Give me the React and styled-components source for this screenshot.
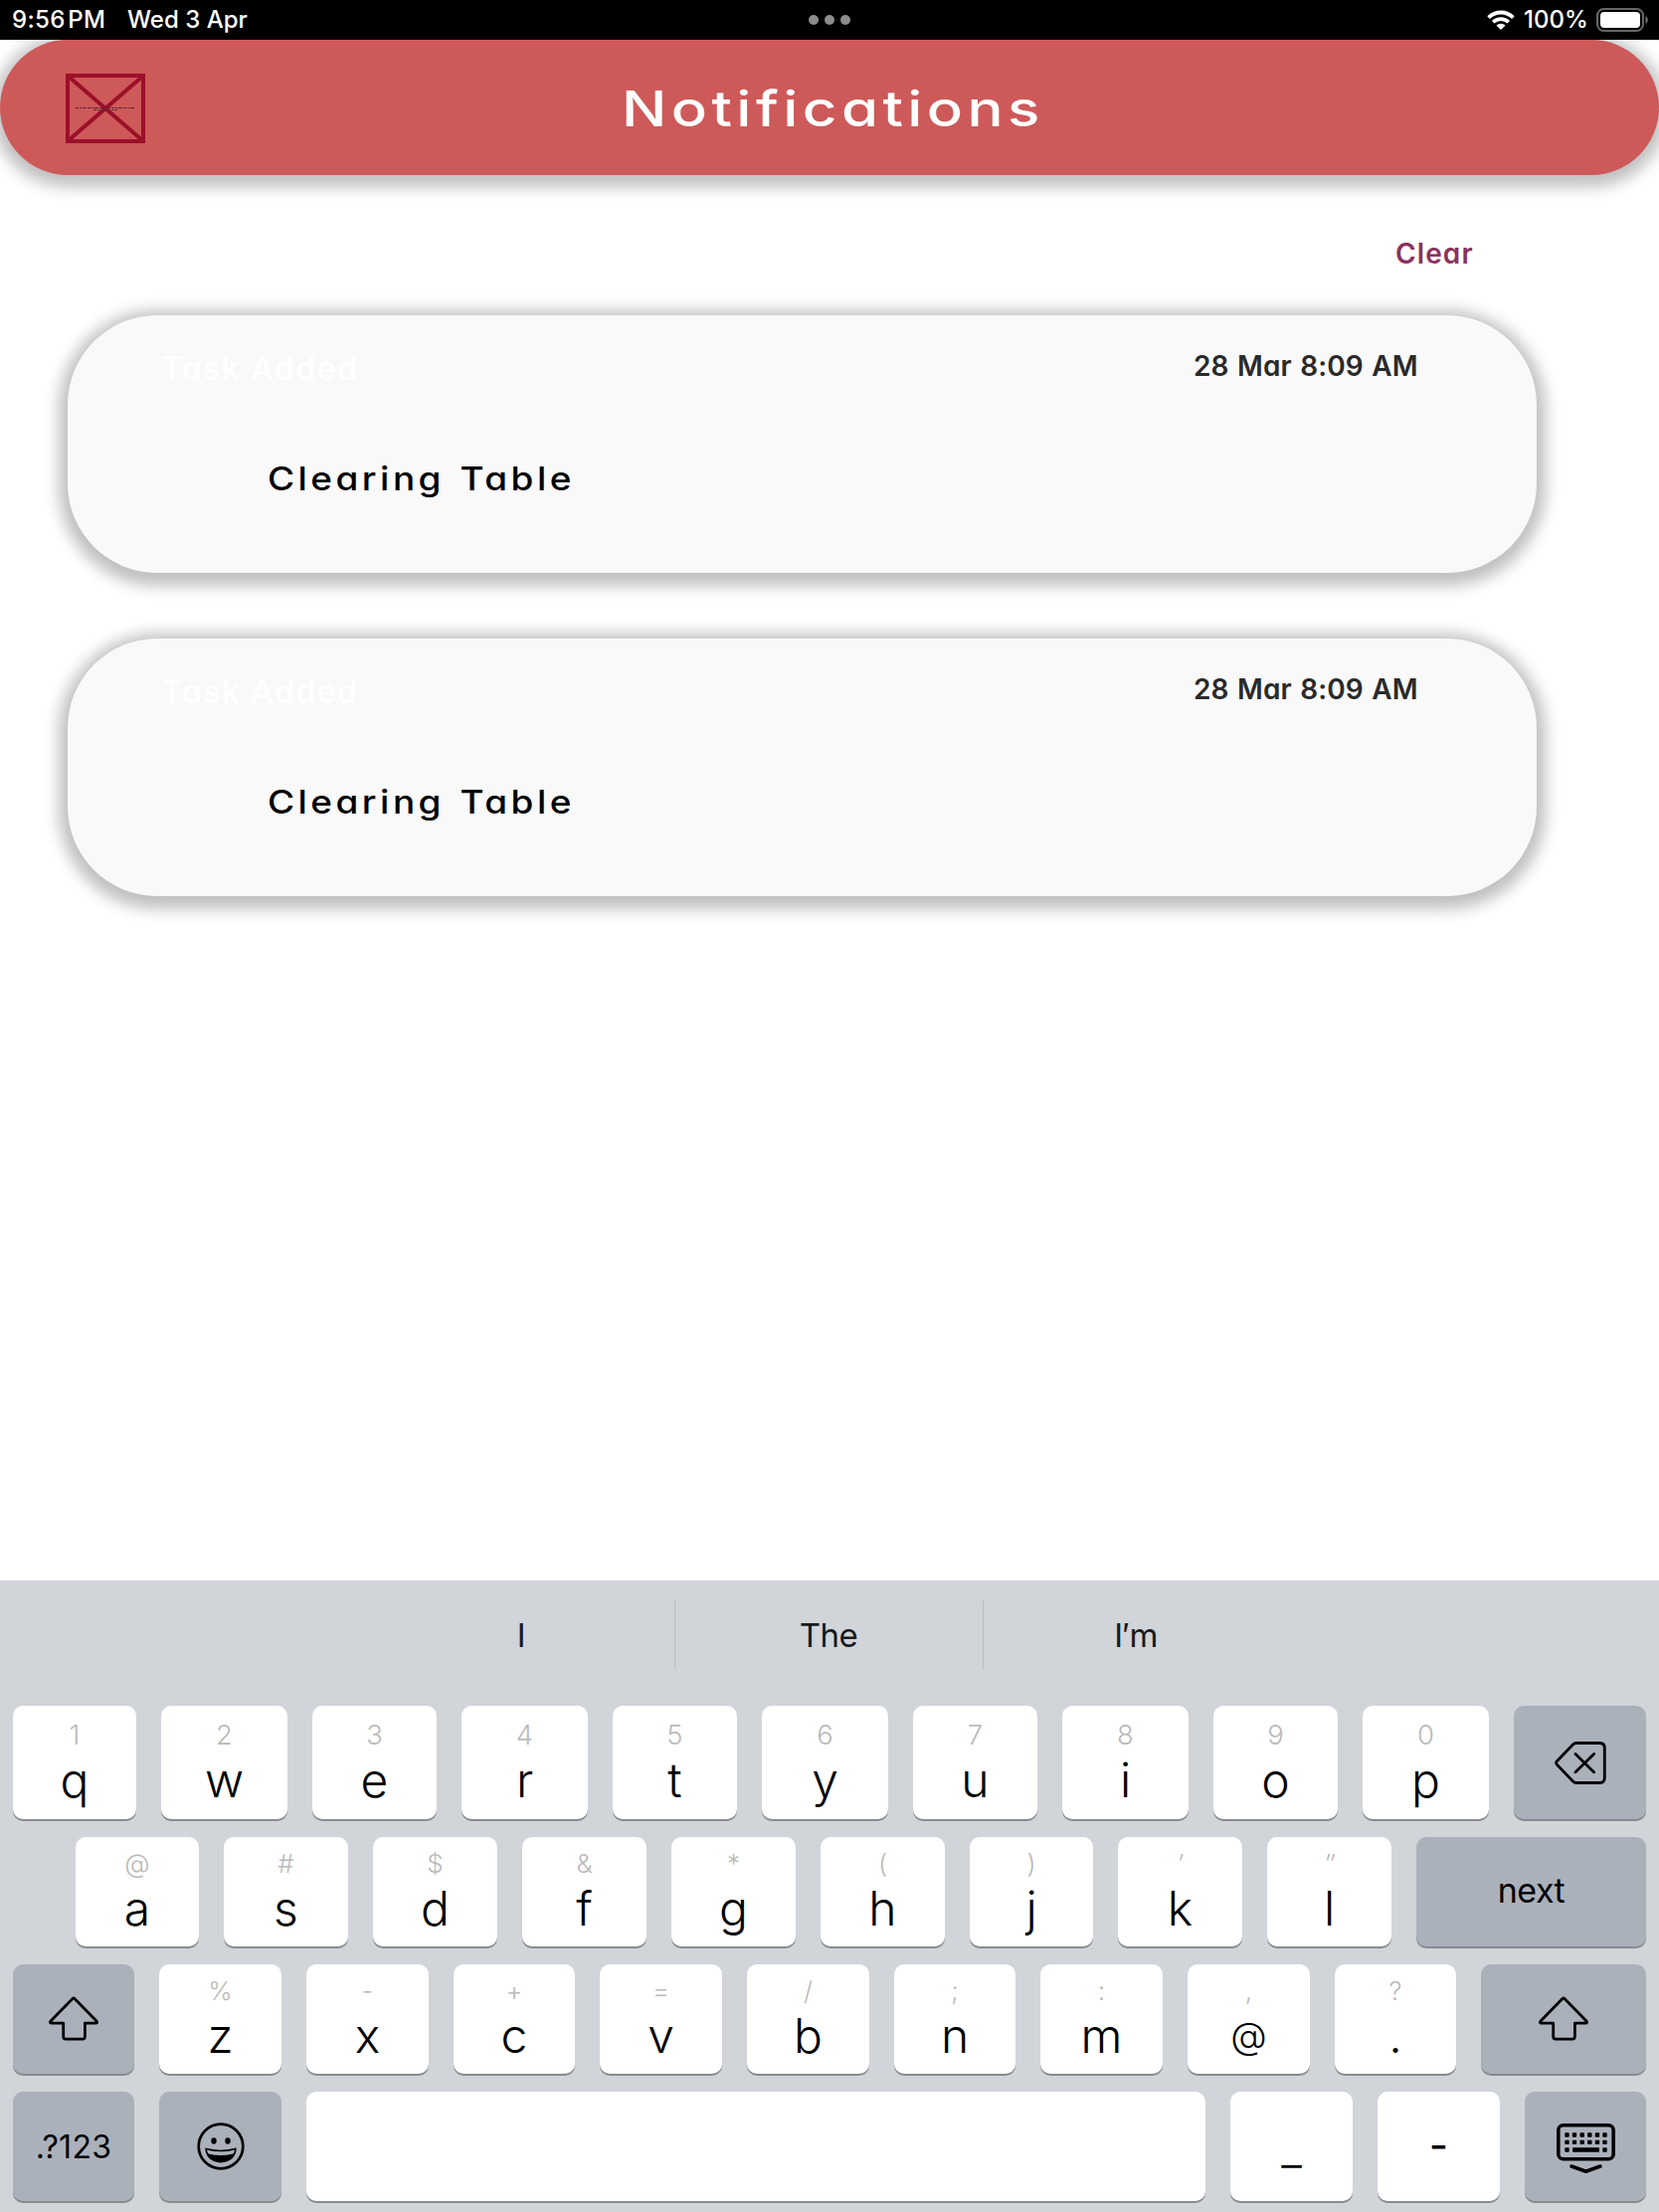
import React from "react";
import styled, { createGlobalStyle } from "styled-components";

const Global = createGlobalStyle`
  *, *::before, *::after { box-sizing: border-box; }
  html, body { margin: 0; padding: 0; background: #fff; }
  body { font-family: Inter, Roboto, "Liberation Sans", sans-serif; overflow: hidden; }
  button { font: inherit; border: 0; margin: 0; padding: 0; background: none; color: inherit; }
`;

const Screen = styled.div`
  width: 1668px;
  height: 2224px;
  display: flex;
  flex-direction: column;
  background: #fff;
  overflow: hidden;
`;

/* ---------- status bar ---------- */

const StatusBar = styled.div`
  flex: none;
  height: 40px;
  display: grid;
  grid-template-columns: 1fr auto 1fr;
  align-items: center;
  padding: 0 10px 0 12px;
  background: #000;
  color: #fff;
  font-size: 24px;
  font-weight: 450;
  line-height: 40px;
  z-index: 1;
`;

const StatusGroup = styled.div`
  display: flex;
  align-items: center;
  height: 40px;
  justify-content: ${(p) => (p.$end ? "flex-end" : "flex-start")};
`;

const StatusText = styled.span`
  width: ${(p) => p.$w}px;
  padding-left: ${(p) => p.$pl || 0}px;
  letter-spacing: ${(p) => p.$ls || 0}px;
  word-spacing: ${(p) => p.$ws || 0}px;
  white-space: nowrap;
`;

const Dots = styled.div`
  display: flex;
  gap: 6px;
  margin-right: 2px;
`;

const Dot = styled.i`
  width: 10px;
  height: 10px;
  border-radius: 50%;
  background: #8c8c8c;
`;

/* ---------- header ---------- */

const Header = styled.header`
  flex: none;
  height: 136px;
  display: flex;
  align-items: center;
  padding: 2px 0 0 66px;
  border-radius: 68px;
  background: #ce5959;
  box-shadow: 0 4px 15px 8px #c0c0c0;
`;

const Title = styled.h1`
  margin: 0 0 1px 479px;
  font-size: 50px;
  font-weight: 450;
  line-height: 60px;
  letter-spacing: 3.7px;
  color: #fff;
  font-feature-settings: "cv11", "ss03";
  transform: scaleX(1.2);
  transform-origin: left center;
  white-space: nowrap;
`;

/* ---------- notifications ---------- */

const Content = styled.main`
  flex: 1;
  display: flex;
  flex-direction: column;
  padding: 59px 123px 0 68px;
  font-feature-settings: "cv11", "ss03";
`;

const ClearButton = styled.button`
  align-self: flex-end;
  width: 142px;
  height: 40px;
  margin-bottom: 42px;
  text-align: left;
  font-size: 28px;
  font-weight: 600;
  line-height: 40px;
  letter-spacing: 1.1px;
  color: #8a335e;
  font-feature-settings: inherit;
`;

const CardList = styled.div`
  display: flex;
  flex-direction: column;
  gap: 66px;
`;

const Card = styled.article`
  height: 259px;
  padding: 33px 0 0 95px;
  border-radius: 90px;
  background: #f9f9f9;
  box-shadow: 0 4px 15px 9px #c0c0c0;
`;

const CardTop = styled.div`
  display: flex;
  height: 40px;
`;

const Kind = styled.div`
  width: 1037px;
  font-size: 32px;
  font-weight: 500;
  line-height: 42px;
  letter-spacing: 1.5px;
  color: #fff;
`;

const When = styled.time`
  font-size: 28px;
  font-weight: 600;
  line-height: 36px;
  letter-spacing: 0.1px;
  word-spacing: 1.3px;
  color: #2a2a2a;
  white-space: nowrap;
`;

const Message = styled.p`
  width: max-content;
  margin: 71px 0 0 106px;
  font-size: 33px;
  font-weight: 480;
  line-height: 40px;
  letter-spacing: 3.1px;
  word-spacing: 2px;
  color: #000;
  transform: scaleX(1.12);
  transform-origin: left center;
  white-space: nowrap;
`;

/* ---------- keyboard ---------- */

const Keyboard = styled.section`
  flex: none;
  height: 635px;
  display: flex;
  flex-direction: column;
  padding: 0 13px;
  background: #d1d4d9;
  color: #000;
`;

const Suggestions = styled.div`
  height: 126px;
  display: flex;
  justify-content: center;
  padding: 20px 2px 0 0;
`;

const Suggestion = styled.div`
  width: 309px;
  height: 70px;
  text-align: center;
  font-size: 33px;
  line-height: 70px;
  color: #17191b;
  letter-spacing: -0.5px;
  box-shadow: ${(p) => (p.$divided ? "-1px 0 0 #b9bcc0, 1px 0 0 #b9bcc0" : "none")};
`;

const Row = styled.div`
  flex: none;
  display: grid;
  grid-template-columns: ${(p) => p.$cols};
  column-gap: 25px;
  height: ${(p) => p.$h}px;
  margin: 0 0 ${(p) => p.$mb}px ${(p) => p.$indent || 0}px;
`;

const Key = styled.button`
  display: flex;
  flex-direction: column;
  align-items: center;
  justify-content: ${(p) => (p.$center ? "center" : "flex-start")};
  padding-top: ${(p) => p.$pad || 0}px;
  border-radius: 10px;
  background: ${(p) => (p.$dark ? "#abb1bb" : "#fff")};
  box-shadow: 0 2px 0 #898b8e;
`;

const Hint = styled.span`
  height: 30px;
  font-size: ${(p) => p.$size}px;
  font-weight: 300;
  font-style: ${(p) => (p.$slanted ? "italic" : "normal")};
  line-height: 30px;
  color: #bababa;
`;

const Letter = styled.span`
  height: 52px;
  margin-top: ${(p) => p.$gap}px;
  font-size: ${(p) => p.$size || 48}px;
  font-weight: 350;
  line-height: 52px;
`;

const Word = styled.span`
  font-size: ${(p) => p.$size}px;
  font-weight: ${(p) => p.$weight || 380};
  line-height: 40px;
  letter-spacing: ${(p) => p.$ls || 0}px;
  margin-top: ${(p) => p.$mt || 0}px;
`;

/* ---------- drawings ---------- */

const Svg = styled.svg`
  display: block;
  flex: none;
  overflow: visible;
`;

const Wifi = () => (
  <Svg width="28" height="20" viewBox="0 0 28 20">
    <path d="M0.3 6.2A19.6 19.6 0 0 1 27.7 6.2L25.1 8.9A15.9 15.9 0 0 0 2.9 8.9Z" fill="#fff" />
    <path d="M4.9 10.9A13.1 13.1 0 0 1 23.1 10.9L20.4 13.6A9.2 9.2 0 0 0 7.6 13.6Z" fill="#fff" />
    <path d="M9.4 15.5A6.8 6.8 0 0 1 18.6 15.5L14 20Z" fill="#fff" />
  </Svg>
);

const Battery = () => (
  <Svg width="53" height="24" viewBox="0 0 53 24">
    <rect x="1" y="1" width="46" height="22" rx="6.5" fill="none" stroke="#666" strokeWidth="2" />
    <rect x="4" y="4" width="40" height="16" rx="4" fill="#fff" />
    <path d="M49.5 8a4.6 4.6 0 0 1 0 8Z" fill="#777" />
  </Svg>
);

const CrossedBox = () => (
  <Svg width="80" height="70" viewBox="0 0 80 70">
    <rect x="2" y="2" width="76" height="66" fill="none" stroke="#9b1029" strokeWidth="4" />
    <path d="M3 3L77 67M77 3L3 67" stroke="#9b1029" strokeWidth="4" />
    <path d="M10 34.5H70" stroke="#5a2330" strokeWidth="1" strokeDasharray="3 1 2 1 4 1" />
    <path d="M28 36.5H52" stroke="#5a2330" strokeWidth="1" strokeDasharray="3 1 2 1" />
  </Svg>
);

const Backspace = () => (
  <Svg width="52" height="43" viewBox="0 0 52 43" fill="none" stroke="#000" strokeWidth="2.8" strokeLinecap="round" strokeLinejoin="round">
    <path d="M22 1.5H45.5Q50.3 1.5 50.3 6.5V36.5Q50.3 41.5 45.5 41.5H22Q20 41.5 18.5 40L2.4 23.2Q0.8 21.5 2.4 19.8L18.5 3Q20 1.5 22 1.5Z" />
    <path d="M21 12.5L39.6 30.8M39.6 12.5L21 30.8" />
  </Svg>
);

const Shift = () => (
  <Svg width="50" height="44" viewBox="0 0 50 44" fill="none" stroke="#000" strokeWidth="2.8" strokeLinejoin="round">
    <path d="M24 1.5Q25 0.5 26 1.5L48 24Q49.5 26.1 47 26.1H36.4V39.5Q36.4 42.1 34 42.1H17Q14.7 42.1 14.7 39.5V26.1H3Q0.5 26.1 2 24Z" />
  </Svg>
);

const Smiley = () => (
  <Svg width="48" height="48" viewBox="0 0 48 48">
    <circle cx="24" cy="24" r="22.3" fill="none" stroke="#000" strokeWidth="2.7" />
    <ellipse cx="17" cy="18.5" rx="2.7" ry="3.2" />
    <ellipse cx="31" cy="18.5" rx="2.7" ry="3.2" />
    <path d="M8.3 25.6Q24 29.8 39.7 25.6C39.7 35 33 40.4 24 40.4S8.3 35 8.3 25.6Z" />
    <path d="M10 27.4Q24 31.2 38 27.4Q37.7 29.6 36.3 31.4Q24 34.4 11.7 31.4Q10.3 29.6 10 27.4Z" fill="#abb1bb" />
  </Svg>
);

const HideKeyboard = () => {
  const cols = [10.5, 18, 25.7, 33.3, 41, 48.5];
  return (
    <Svg width="59" height="51" viewBox="0 0 59 51">
      <rect x="1.8" y="1.8" width="55.4" height="34" rx="5" fill="none" stroke="#000" strokeWidth="3.6" />
      {cols.map((x) => (
        <g key={x}>
          <rect x={x - 2.2} y="9.3" width="4.4" height="4.4" rx="0.8" />
          <rect x={x - 2.2} y="16.7" width="4.4" height="4.4" rx="0.8" />
        </g>
      ))}
      <rect x="8.3" y="24.3" width="4.4" height="4.4" rx="0.8" />
      <rect x="16" y="24.3" width="27" height="4.4" rx="0.8" />
      <rect x="46.3" y="24.3" width="4.4" height="4.4" rx="0.8" />
      <path d="M15 43L29.5 48.3L44 43" fill="none" stroke="#000" strokeWidth="3.6" strokeLinecap="round" strokeLinejoin="round" />
    </Svg>
  );
};

/* ---------- data ---------- */

const notifications = [
  { id: 1, kind: "Task Added", when: "28 Mar 8:09 AM", message: "Clearing Table" },
  { id: 2, kind: "Task Added", when: "28 Mar 8:09 AM", message: "Clearing Table" },
];

const rowOne = [["1", "q"], ["2", "w"], ["3", "e"], ["4", "r"], ["5", "t"], ["6", "y"], ["7", "u"], ["8", "i"], ["9", "o"], ["0", "p"]];
const rowTwo = [["@", "a"], ["#", "s"], ["$", "d"], ["&", "f"], ["*", "g"], ["(", "h"], [")", "j"], ["′", "k"], ["″", "l"]];
const rowThree = [["%", "z"], ["-", "x"], ["+", "c"], ["=", "v"], ["/", "b"], [";", "n"], [":", "m"], [",", "@"], ["?", "."]];

const CharKeys = ({ keys, pad, gap, hint }) =>
  keys.map(([small, big]) => (
    <Key key={big} $pad={pad}>
      <Hint $size={hint} $slanted={small === "′" || small === "″"}>{small}</Hint>
      <Letter $gap={gap} $size={big === "@" ? 37.5 : 48}>{big}</Letter>
    </Key>
  ));

export default function App() {
  return (
    <Screen>
      <Global />
      <StatusBar>
        <StatusGroup>
          <StatusText $w={116} $ls={0.3} $ws={-4}>9:56 PM</StatusText>
          <StatusText $w={130}>Wed 3 Apr</StatusText>
        </StatusGroup>
        <Dots><Dot /><Dot /><Dot /></Dots>
        <StatusGroup $end>
          <Wifi />
          <StatusText $w={82} $pl={9}>100%</StatusText>
          <Battery />
        </StatusGroup>
      </StatusBar>

      <Header>
        <CrossedBox />
        <Title>Notifications</Title>
      </Header>

      <Content>
        <ClearButton>Clear</ClearButton>
        <CardList>
          {notifications.map((n) => (
            <Card key={n.id}>
              <CardTop>
                <Kind>{n.kind}</Kind>
                <When>{n.when}</When>
              </CardTop>
              <Message>{n.message}</Message>
            </Card>
          ))}
        </CardList>
      </Content>

      <Keyboard>
        <Suggestions>
          <Suggestion>I</Suggestion>
          <Suggestion $divided>The</Suggestion>
          <Suggestion>I′m</Suggestion>
        </Suggestions>
        <Row $h={114} $mb={18} $cols="124px 127px 125px 127px 125px 127px 125px 127px 125px 127px 133px">
          <CharKeys keys={rowOne} pad={14} gap={5} hint={27.5} />
          <Key $dark $center><Backspace /></Key>
        </Row>
        <Row $h={110} $mb={18} $indent={63} $cols="124px 125px 125px 125px 125px 125px 124px 125px 125px 231px">
          <CharKeys keys={rowTwo} pad={12} gap={4} hint={26} />
          <Key $dark $center><Word $size={34} $ls={-0.5} $mt={-3}>next</Word></Key>
        </Row>
        <Row $h={110} $mb={18} $cols="122px 123px 123px 122px 123px 123px 122px 123px 123px 122px 166px">
          <Key $dark $center><Shift /></Key>
          <CharKeys keys={rowThree} pad={12} gap={4} hint={26} />
          <Key $dark $center><Shift /></Key>
        </Row>
        <Row $h={110} $mb={0} $cols="122px 123px 904px 123px 123px 122px">
          <Key $dark $center><Word $size={32} $ls={0.3} $mt={1}>.?123</Word></Key>
          <Key $dark $center><Smiley /></Key>
          <Key />
          <Key $center><Word $size={46} $weight={350} $mt={3}>_</Word></Key>
          <Key $center><Word $size={42} $weight={400} $mt={-2}>-</Word></Key>
          <Key $dark $center $pad={5}><HideKeyboard /></Key>
        </Row>
      </Keyboard>
    </Screen>
  );
}
